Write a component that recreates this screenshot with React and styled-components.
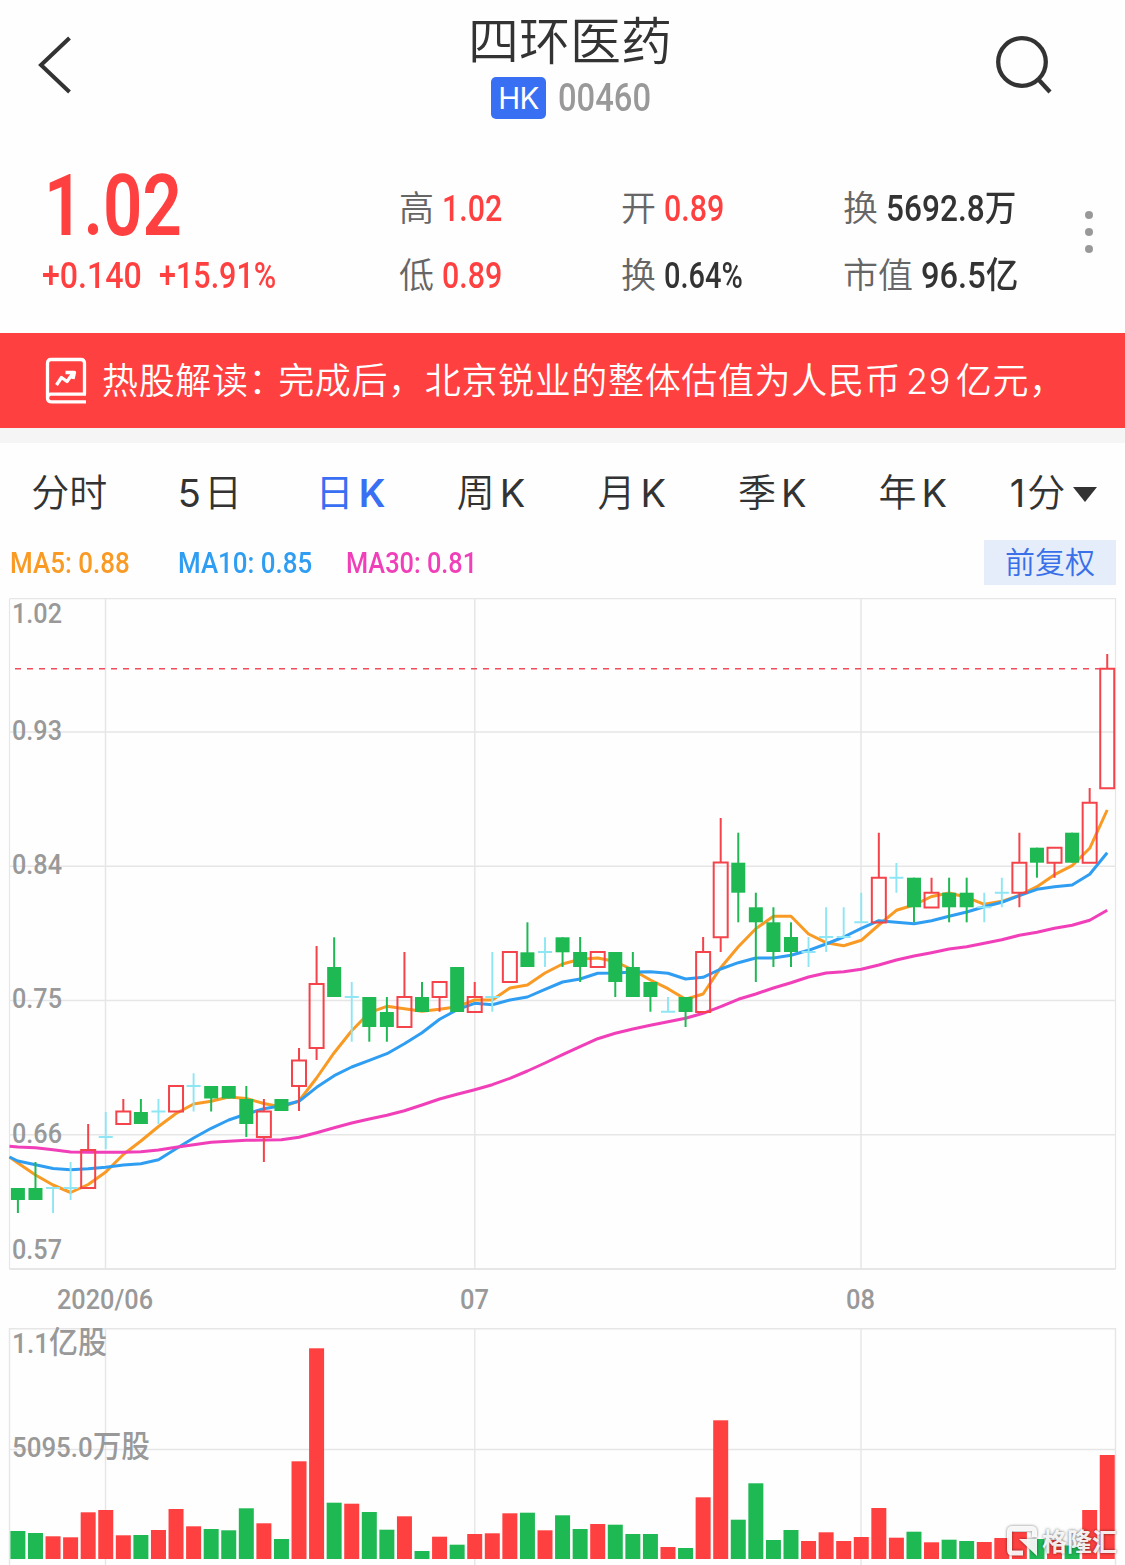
import React from 'react';
import styled, { createGlobalStyle } from 'styled-components';

const Global = createGlobalStyle`
  * { box-sizing: border-box; }
  body { margin: 0; background: #fff; }
`;
const cjk = `"Inter", "Noto Sans CJK SC", sans-serif`;
const din = `"Roboto", "Noto Sans CJK SC", sans-serif`;
const RED = '#ff4040';
const GREEN = '#1fb954';
const GREY = '#999';

const Page = styled.main`
  width: 1125px;
  height: 1565px;
  overflow: hidden;
  position: relative;
  background: #fefefe;
  font-family: ${cjk};
  color: #333;
  display: flex;
  flex-direction: column;
`;
const Header = styled.header`
  height: 150px;
  flex: none;
  display: grid;
  grid-template-columns: 150px 1fr 150px;
`;
const IconButton = styled.button`
  border: 0;
  padding: 0;
  background: none;
  height: 130px;
  svg { display: block; }
`;
const Titles = styled.div`
  display: flex;
  flex-direction: column;
  align-items: center;
  padding-left: 15px;
`;
const Name = styled.h1`
  margin: 7px 0 0;
  font-size: 51px;
  line-height: 69px;
  font-weight: 350;
`;
const CodeLine = styled.div`
  display: flex;
  gap: 12px;
  align-items: center;
  padding-left: 2px;
`;
const Market = styled.span`
  width: 55px;
  height: 42px;
  margin-top: -2px;
  border-radius: 5px;
  background: #396ff2;
  color: #fff;
  font-size: 29.5px;
  font-weight: 400;
  letter-spacing: -0.5px;
  line-height: 43px;
  text-align: center;
`;
const Cell = styled.span`
  display: inline-block;
  flex: none;
  width: ${p => p.$w}px;
  height: ${p => p.$size * 1.2}px;
`;
const Glyphs = styled.span`
  display: inline-block;
  white-space: pre;
  font-family: ${din};
  font-size: ${p => p.$size}px;
  line-height: 1.2;
  font-weight: ${p => p.$weight};
  color: ${p => p.$color};
  transform-origin: 0 50%;
`;
function Din({ w, size, weight = 500, color, children }) {
  const ref = React.useRef(null);
  const [scale, setScale] = React.useState(1);
  React.useLayoutEffect(() => {
    setScale(w / ref.current.offsetWidth);
  }, [w, size]);
  return (
    <Cell $w={w} $size={size}>
      <Glyphs ref={ref} $size={size} $weight={weight} $color={color} style={{ transform: `scaleX(${scale})` }}>
        {children}
      </Glyphs>
    </Cell>
  );
}

const Quote = styled.section`
  height: 183px;
  flex: none;
  display: grid;
  grid-template-columns: 357px 222px 222px 230px 1fr;
  padding-left: 42px;
`;
const Price = styled.div`
  padding: 5px 0 0 2px;
  height: 105px;
`;
const Changes = styled.div`
  display: flex;
  gap: 17px;
`;
const Stats = styled.div`
  display: flex;
  flex-direction: column;
  padding-top: 34px;
`;
const Stat = styled.div`
  height: 67px;
  display: flex;
  align-items: flex-start;
  gap: 8px;
  ${Cell} { margin-top: 4px; }
`;
const Label = styled.span`
  font-size: 35px;
  line-height: 48px;
  font-weight: 350;
  color: #666;
  white-space: nowrap;
`;
const More = styled.button`
  border: 0;
  background: none;
  padding: 0;
  margin: 61px 0 0 12px;
  height: 42px;
  width: 8px;
  display: flex;
  flex-direction: column;
  justify-content: space-between;
`;
const Dot = styled.i`
  width: 8px;
  height: 8px;
  border-radius: 50%;
  background: #999;
`;
const Banner = styled.section`
  height: 95px;
  flex: none;
  background: ${RED};
  color: #fff;
  display: flex;
  align-items: center;
  padding-left: 45px;
  svg { flex: none; margin-right: 15px; }
`;
const Headline = styled.p`
  margin: 0 0 5px;
  font-size: 36px;
  font-weight: 350;
  letter-spacing: 0.65px;
  word-spacing: -6px;
  white-space: nowrap;
`;
const Colon = styled.span`
  letter-spacing: -6.5px;
`;
const Gap = styled.div`
  height: 15px;
  flex: none;
  background: #f5f5f5;
`;
const Tabs = styled.nav`
  height: 97px;
  flex: none;
  display: grid;
  grid-template-columns: repeat(8, 140.6px);
  margin-left: -1px;
`;
const Tab = styled.a`
  display: flex;
  justify-content: center;
  align-items: center;
  gap: ${p => p.$gap ?? 5}px;
  padding-bottom: 4px;
  font-size: 38px;
  font-weight: ${p => (p.$on ? 400 : 350)};
  color: ${p => (p.$on ? '#396ff2' : '#333')};
  b {
    font-weight: ${p => (p.$on ? 600 : 400)};
    padding-top: 7px;
  }
`;
const Caret = styled.i`
  border: 12px solid transparent;
  border-top: 15px solid #333;
  border-bottom: 0;
  margin: 9px 0 0 6px;
`;
const Legend = styled.div`
  height: 50px;
  flex: none;
  display: flex;
  padding: 0 9px 0 10px;
`;
const LegendItem = styled.div`
  width: 168px;
  padding-top: 6px;
`;
const Adjust = styled.button`
  margin-left: auto;
  width: 132px;
  height: 45px;
  border: 0;
  padding: 0;
  background: #e4edf9;
  color: #396fe8;
  font: 350 30px/45px ${cjk};
`;
const Chart = styled.svg`
  display: block;
  flex: none;
  font-family: ${din};
  font-weight: 500;
  font-size: 28px;
  fill: none;
`;
const Watermark = styled.div`
  position: absolute;
  left: 1005px;
  top: 1522px;
  display: flex;
  align-items: center;
  gap: 3px;
  color: rgba(255, 255, 255, 0.92);
  font: 700 25px/36px "Noto Sans CJK SC", sans-serif;
  text-shadow: 0 0 3px rgba(0, 0, 0, 0.6);
  svg { filter: drop-shadow(0 0 1.5px rgba(0, 0, 0, 0.55)); }
`;

// [kind, high, body top, body bottom, low]; r = up, g = down, c = unchanged
const candles = [
  ['g', 1188, 1188, 1200, 1213], ['g', 1162, 1188, 1200, 1200], ['c', 1188, 1188, 1188, 1213],
  ['c', 1162, 1188, 1188, 1200], ['r', 1124, 1150, 1188, 1188], ['c', 1112, 1137, 1137, 1149],
  ['r', 1099, 1111.5, 1124, 1124], ['g', 1099, 1112, 1124, 1124], ['c', 1099, 1111.5, 1111.5, 1124],
  ['r', 1086, 1086, 1111.5, 1111.5], ['c', 1073.3, 1086, 1086, 1111.5], ['g', 1086, 1086, 1098.5, 1111.5],
  ['g', 1086, 1086, 1098.5, 1098.5], ['g', 1086, 1099, 1124, 1137], ['r', 1099, 1111.5, 1137, 1162],
  ['g', 1099, 1099, 1111, 1111], ['r', 1048, 1060.5, 1086, 1111], ['r', 946, 984, 1048, 1060],
  ['g', 937.3, 967, 997, 997], ['c', 982, 997, 997, 1041.7], ['g', 997, 997, 1027, 1041.7],
  ['g', 997, 1012, 1027, 1041.7], ['r', 952, 997, 1027, 1027], ['g', 982, 997, 1012, 1012],
  ['r', 982, 982, 997, 1011.7], ['g', 967, 967, 1012, 1012], ['r', 982, 997, 1012, 1012],
  ['c', 952, 997, 997, 1011.7], ['r', 952, 952, 982, 982], ['g', 922.3, 952.3, 967, 967],
  ['c', 937.3, 952, 952, 967], ['g', 937.3, 937.3, 952.3, 967], ['g', 937, 952, 967, 982],
  ['r', 952, 952, 967, 967], ['g', 952, 952, 982, 997], ['g', 952, 967, 997, 997],
  ['g', 982, 982, 997, 1011.7], ['c', 997, 1011.7, 1011.7, 1011.7], ['g', 997, 997, 1012, 1027],
  ['r', 937, 952, 1012, 1012], ['r', 818, 862.5, 937.3, 952], ['g', 832.7, 862.7, 892.7, 922.3],
  ['g', 892.7, 907.3, 922.3, 982], ['g', 907.3, 922.3, 952, 967], ['g', 922.3, 937, 952, 967],
  ['c', 937, 952, 952, 967], ['c', 907.3, 937, 937, 952], ['c', 907.3, 937, 937, 937],
  ['c', 892.7, 922.3, 922.3, 922.3], ['r', 832.7, 877.7, 922.5, 922.5], ['c', 863, 877.7, 877.7, 892.7],
  ['g', 877.7, 877.7, 907.3, 922.3], ['r', 877.7, 892.7, 907.5, 907.5], ['g', 877.7, 892.7, 907.3, 922.3],
  ['g', 877.7, 892.7, 907.3, 922.3], ['c', 892.7, 907.3, 907.3, 922.3], ['c', 877.7, 892.7, 892.7, 907.3],
  ['r', 832.7, 862.7, 892.7, 907.3], ['g', 847.7, 847.7, 862.7, 877.7], ['r', 847.7, 847.7, 862.7, 877.7],
  ['g', 832.7, 832.7, 862.7, 862.7], ['r', 788, 802.7, 862.7, 862.7], ['r', 654, 668.7, 788.3, 788.3],
];
const ma5 = [1163, 1175, 1185, 1192.5, 1184.5, 1172, 1154.5, 1141, 1126.5, 1113.5, 1104, 1101.3, 1097, 1098.5, 1103.5, 1107, 1101, 1078, 1052.7, 1030.7, 1012.7, 1006.3, 1008.7, 1011.3, 1009.3, 1006.7, 1000, 1000, 988, 985, 973, 964, 959.3, 958, 961.5, 970, 980, 988.7, 999.3, 994, 967.7, 946.7, 928.7, 916.3, 916.3, 934, 942.7, 945.7, 940.3, 925, 910.3, 905, 896.5, 893, 897.3, 904.3, 901.3, 895.3, 886.7, 874.7, 865.7, 848.3, 810];
const ma10 = [1161, 1164.7, 1168.5, 1169.7, 1168.7, 1167.3, 1165, 1163.7, 1159.7, 1148.7, 1138, 1128.3, 1120, 1114, 1108.7, 1105.7, 1101.3, 1087.3, 1075.7, 1067, 1060.3, 1053.7, 1043.7, 1032.7, 1019.3, 1009.7, 1003.3, 1004.7, 1000, 997, 989.3, 982, 979, 973.3, 973, 972, 971.7, 973.3, 979, 977.3, 969, 962.7, 958, 958, 955.3, 950.3, 944, 937, 928.3, 920.7, 922.3, 923.7, 920.7, 916.3, 912, 906.7, 902.3, 895.7, 889.3, 886.7, 885, 874.3, 852.7];
const ma30 = [1147, 1147.7, 1149.7, 1152, 1152.3, 1152.3, 1152.3, 1151.7, 1150, 1147.3, 1144.7, 1142.3, 1141.3, 1140.3, 1140, 1139.7, 1137.3, 1132.7, 1127.7, 1123, 1119, 1115.3, 1110.7, 1105, 1099, 1094.3, 1089.7, 1084.7, 1078.3, 1071, 1063, 1054.7, 1046.7, 1038.7, 1033.3, 1029, 1025.3, 1021.7, 1018.3, 1013.3, 1006.7, 999.3, 994, 988, 982.7, 977, 973, 971.7, 969.3, 965, 960, 956, 952.7, 949, 946.7, 943.3, 939.7, 935.3, 932.3, 928.3, 925.3, 920.3, 910.3];
const volumes = [28, 26, 22.7, 21.7, 46.7, 49, 23.7, 24, 29, 50, 32.7, 30, 28.7, 50.7, 35.7, 20, 97.7, 210.7, 56.3, 55.3, 47, 29.3, 42.7, 8, 22.3, 14.3, 25, 25.7, 45.7, 46.3, 28.7, 43.7, 30, 35, 34.3, 25, 25, 12, 11, 61.7, 138.7, 39.3, 75.7, 19, 29, 18, 26.7, 18, 22, 51, 21.3, 27.3, 16.7, 19.3, 18, 17, 21, 27, 20, 19, 13.5, 49, 104];
const downs = new Set([0, 1, 7, 11, 12, 13, 15, 18, 20, 21, 23, 25, 29, 31, 32, 34, 35, 36, 38, 41, 42, 43, 44, 51, 53, 54, 58, 60]);
const cx = i => 17.9 + 17.57 * i;
const line = (ys, y0) => `M9.5 ${y0}` + ys.map((y, i) => `L${cx(i).toFixed(1)} ${y}`).join('');

function Candle({ i, d: [kind, hi, top, bot, lo] }) {
  const x = cx(i);
  if (kind === 'c') return <path d={`M${x} ${hi}V${lo}M${x - 7} ${top}h14`} stroke="#8ee6f4" strokeWidth="1.9" />;
  if (kind === 'g') return (
    <g>
      <path d={`M${x} ${hi}V${lo}`} stroke={GREEN} strokeWidth="2" />
      <rect x={x - 7} y={top} width="14" height={bot - top} fill={GREEN} />
    </g>
  );
  return <path d={`M${x} ${hi}V${top}M${x} ${bot}V${lo}M${x - 7} ${top}h14V${bot}h-14Z`} stroke="#f4434a" strokeWidth="2" />;
}

function PriceChart() {
  return (
    <Chart width="1125" height="730" viewBox="0 590 1125 730">
      <g stroke="#e6e6e6" strokeWidth="1.5">
        <path d="M9.5 598.7H1115.5V1269M9.5 598.7V1269" strokeWidth="1.2" />
        <path d="M9.5 732H1115M9.5 866.3H1115M9.5 1000.5H1115M9.5 1134.7H1115M105.5 599V1269M474.8 599V1269M861 599V1269" />
        <path d="M9.5 1269H1115.5" strokeWidth="2" />
      </g>
      <g fill={GREY}>
        {[['1.02', 622.5], ['0.93', 740], ['0.84', 874], ['0.75', 1008], ['0.66', 1143], ['0.57', 1258.5]].map(([t, y]) => (
          <text key={t} x="12" y={y} textLength="50" lengthAdjust="spacingAndGlyphs">{t}</text>
        ))}
        <text x="57" y="1309" textLength="96" lengthAdjust="spacingAndGlyphs">2020/06</text>
        <text x="460" y="1309" textLength="29" lengthAdjust="spacingAndGlyphs">07</text>
        <text x="846" y="1309" textLength="29" lengthAdjust="spacingAndGlyphs">08</text>
      </g>
      <g strokeWidth="3" strokeLinejoin="round">
        <path d={line(ma5, 1157)} stroke="#f99a24" />
        <path d={line(ma10, 1157)} stroke="#2f9ef2" />
        <path d={line(ma30, 1146.3)} stroke="#f03fb8" />
      </g>
      <path d="M15 668.7H1100" stroke="#ee4b5c" strokeWidth="1.6" strokeDasharray="6 6" />
      {candles.map((d, i) => <Candle key={i} i={i} d={d} />)}
    </Chart>
  );
}

function VolumeChart() {
  return (
    <Chart width="1125" height="245" viewBox="0 1320 1125 245">
      <path d="M9.500 1565V1328.700H1115.500V1565M9.500 1449.500H1115M105.500 1329V1565M474.800 1329V1565M861 1329V1565" stroke="#e6e6e6" strokeWidth="1.4" />
      {volumes.map((v, i) => (
        <rect key={i} x={cx(i) - 7.5} y={1559 - v} width="15" height={v} fill={downs.has(i) ? GREEN : RED} />
      ))}
      <g fill={GREY}>
        <text x="12" y="1353" textLength="95" lengthAdjust="spacingAndGlyphs">1.1<tspan fontSize="31">亿股</tspan></text>
        <text x="12" y="1457" textLength="138" lengthAdjust="spacingAndGlyphs">5095.0<tspan fontSize="31">万股</tspan></text>
      </g>
    </Chart>
  );
}

export default function App() {
  return (
    <Page>
      <Global />
      <Header>
        <IconButton aria-label="back">
          <svg width="150" height="130" fill="none" stroke="#333" strokeWidth="4">
            <path d="M69.500 38L41 65L69.500 92" />
          </svg>
        </IconButton>
        <Titles>
          <Name>四环医药</Name>
          <CodeLine>
            <Market>HK</Market>
            <Din w={93} size={38} color={GREY}>00460</Din>
          </CodeLine>
        </Titles>
        <IconButton aria-label="search">
          <svg width="150" height="130" fill="none" stroke="#333" strokeWidth="4.300">
            <circle cx="47" cy="62" r="23.800" />
            <path d="M63 79L75 92" />
          </svg>
        </IconButton>
      </Header>
      <Quote>
        <div>
          <Price><Din w={138} size={85} weight={600} color={RED}>1.02</Din></Price>
          <Changes>
            <Din w={100} size={36} color={RED}>+0.140</Din>
            <Din w={117} size={36} color={RED}>+15.91%</Din>
          </Changes>
        </div>
        <Stats>
          <Stat><Label>高</Label><Din w={60} size={36} color={RED}>1.02</Din></Stat>
          <Stat><Label>低</Label><Din w={60} size={36} color={RED}>0.89</Din></Stat>
        </Stats>
        <Stats>
          <Stat><Label>开</Label><Din w={60} size={36} color={RED}>0.89</Din></Stat>
          <Stat><Label>换</Label><Din w={79} size={36} color="#333">0.64%</Din></Stat>
        </Stats>
        <Stats>
          <Stat><Label>换</Label><Din w={130} size={36} color="#333">5692.8万</Din></Stat>
          <Stat><Label>市值</Label><Din w={97} size={36} color="#333">96.5亿</Din></Stat>
        </Stats>
        <More aria-label="more"><Dot /><Dot /><Dot /></More>
      </Quote>
      <Banner>
        <svg width="42" height="48" fill="none" stroke="#fff" strokeWidth="3.300">
          <path d="M39.500 37V6Q39.500 2.500 36 2.500H6Q2.500 2.500 2.500 6V41Q2.500 44.800 6 44.800H41M2.500 41Q3 37.200 6 37.200H41" />
          <path d="M11.500 28L16.500 20.500L22 24.500L28.500 15.500M20.500 15.500H29.500L28 22" strokeLinejoin="round" />
        </svg>
        <Headline>热股解读<Colon>：</Colon>完成后，北京锐业的整体估值为人民币 29 亿元，</Headline>
      </Banner>
      <Gap />
      <Tabs>
        <Tab>分时</Tab>
        <Tab $gap={3}><b>5</b>日</Tab>
        <Tab $on>日<b>K</b></Tab>
        <Tab>周<b>K</b></Tab>
        <Tab>月<b>K</b></Tab>
        <Tab>季<b>K</b></Tab>
        <Tab>年<b>K</b></Tab>
        <Tab $gap={2}><b>1</b>分<Caret /></Tab>
      </Tabs>
      <Legend>
        <LegendItem><Din w={120} size={29} color="#f99a24">MA5: 0.88</Din></LegendItem>
        <LegendItem><Din w={134} size={29} color="#2f9ef2">MA10: 0.85</Din></LegendItem>
        <LegendItem><Din w={131} size={29} color="#f03fb8">MA30: 0.81</Din></LegendItem>
        <Adjust>前复权</Adjust>
      </Legend>
      <PriceChart />
      <VolumeChart />
      <Watermark>
        <svg width="34" height="36" fill="none" stroke="#fff" strokeOpacity="0.92" strokeWidth="5">
          <path d="M29.500 15V9.500Q29.500 6.500 26.500 6.500H7.500Q4.500 6.500 4.500 9.500V28Q4.500 31 7.500 31H18" />
          <path d="M14 17H32V34Z" fill="#fff" fillOpacity="0.92" stroke="none" />
        </svg>
        格隆汇
      </Watermark>
    </Page>
  );
}
